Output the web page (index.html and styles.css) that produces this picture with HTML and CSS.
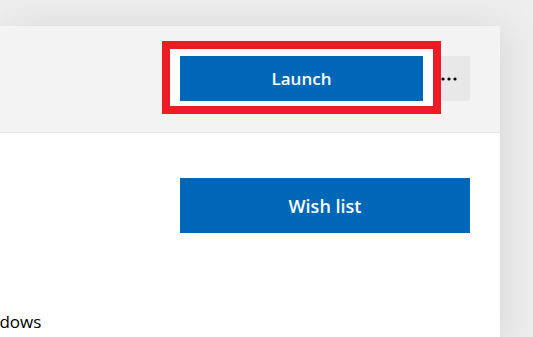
FILE: index.html
```html
<!DOCTYPE html>
<html lang="en">
<head>
    <meta charset="UTF-8">
    <meta name="viewport" content="width=device-width, initial-scale=1.0">
    <title>Store listing</title>
    <link rel="stylesheet" href="styles.css">
</head>
<body>
    <div class="page">
        <div class="card">
            <div class="card-header">
                <div class="actions">
                    <div class="highlight">
                        <button class="btn btn-launch">Launch</button>
                    </div>
                    <button class="btn-more" aria-label="More options">
                        <svg width="16" height="4" viewBox="0 0 16 4">
                            <circle cx="2" cy="2" r="1.6" fill="#000"/>
                            <circle cx="8" cy="2" r="1.6" fill="#000"/>
                            <circle cx="14" cy="2" r="1.6" fill="#000"/>
                        </svg>
                    </button>
                </div>
            </div>
            <div class="card-body">
                <div class="wish-row">
                    <button class="btn btn-wish">Wish list</button>
                </div>
                <p class="platform">Windows</p>
            </div>
        </div>
    </div>
</body>
</html>
```

FILE: styles.css
```css
*,
*::before,
*::after {
    margin: 0;
    padding: 0;
    box-sizing: border-box;
}

body {
    font-family: 'Open Sans', 'Noto Sans', sans-serif;
    background-color: #eeeeee;
    height: 100vh;
    overflow: hidden;
}

.page {
    padding-top: 26px;
}

.card {
    width: 500px;
    height: 320px;
    background-color: white;
    box-shadow: 6px 0 36px rgba(0, 0, 0, 0.09);
}

.card-header {
    background-color: #f3f3f3;
    border-bottom: 1px solid #e5e5e5;
    padding: 30px 30px 31px 0;
    display: flex;
    justify-content: flex-end;
}

.actions {
    display: flex;
}

.highlight {
    position: relative;
    z-index: 1;
}

/* annotation frame drawn over the launch button */
.highlight::after {
    content: '';
    position: absolute;
    left: -18px;
    top: -15px;
    width: 279px;
    height: 73px;
    border: 8px solid #ed1c24;
    pointer-events: none;
}

.highlight::before {
    content: '';
    position: absolute;
    left: -10px;
    top: -7px;
    width: 263px;
    height: 57px;
    background-color: white;
    z-index: -1;
}

.btn {
    border: none;
    background-color: #0067b8;
    color: white;
    font-family: inherit;
    font-weight: 600;
    cursor: pointer;
}

.btn-launch {
    width: 243px;
    height: 45px;
    font-size: 17px;
}

.btn-more {
    width: 47px;
    height: 45px;
    border: none;
    background-color: #e8e8e8;
    display: flex;
    align-items: center;
    padding-left: 18px;
    cursor: pointer;
}

.card-body {
    padding: 45px 30px 0 0;
}

.wish-row {
    display: flex;
    justify-content: flex-end;
}

.btn-wish {
    width: 290px;
    height: 55px;
    font-size: 18px;
}

.platform {
    margin-top: 77px;
    margin-left: -31px;
    font-size: 17px;
    line-height: 23px;
    color: #000;
}
```
